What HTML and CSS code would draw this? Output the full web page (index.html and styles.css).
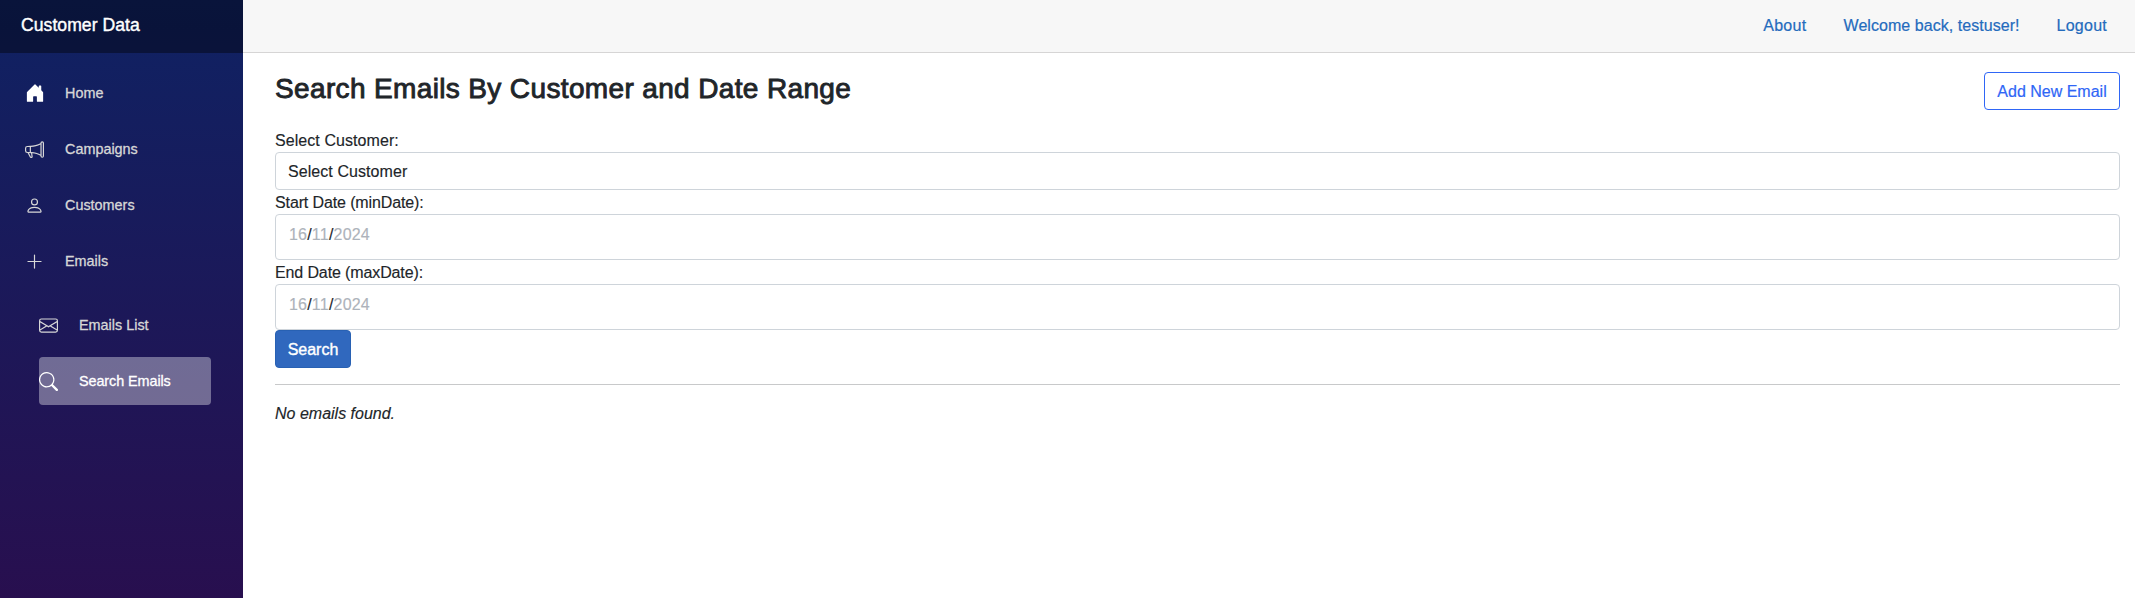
FILE: index.html
```html
<!DOCTYPE html>
<html lang="en">
<head>
<meta charset="utf-8">
<title>Customer Data</title>
<link rel="stylesheet" href="styles.css">
</head>
<body>
<div class="page">
  <aside class="sidebar">
    <div class="brand">Customer Data</div>
    <nav class="nav">
      <a class="nav-link"><svg class="icon icon-home" viewBox="0 0 16 16"><path d="M6.5 14.5v-3.505c0-.245.25-.495.5-.495h2c.25 0 .5.25.5.5v3.5a.5.5 0 0 0 .5.5h4a.5.5 0 0 0 .5-.5v-7a.5.5 0 0 0-.146-.354L13 5.793V2.5a.5.5 0 0 0-.5-.5h-1a.5.5 0 0 0-.5.5v1.293L8.354 1.146a.5.5 0 0 0-.708 0l-6 6A.5.5 0 0 0 1.5 7.5v7a.5.5 0 0 0 .5.5h4a.5.5 0 0 0 .5-.5"/></svg><span>Home</span></a>
      <a class="nav-link"><svg class="icon" viewBox="0 0 16 16"><path d="M13 2.5a1.5 1.5 0 0 1 3 0v11a1.5 1.5 0 0 1-3 0v-.214c-2.162-1.241-4.49-1.843-6.912-2.083l.405 2.712A1 1 0 0 1 5.51 15.1h-.548a1 1 0 0 1-.916-.599l-1.85-3.49-.202-.003A2.014 2.014 0 0 1 0 9V7a2.02 2.02 0 0 1 1.992-2.013 75 75 0 0 0 2.483-.075c3.043-.154 6.148-.849 8.525-2.199zm1 0v11a.5.5 0 0 0 1 0v-11a.5.5 0 0 0-1 0m-1 1.35c-2.344 1.205-5.209 1.842-8 2.033v4.233q.27.015.537.036c2.568.189 5.093.744 7.463 1.993zm-9 6.215v-4.13a95 95 0 0 1-1.992.052A1.02 1.02 0 0 0 1 7v2c0 .55.448 1.002 1.006 1.009A61 61 0 0 1 4 10.065m-.657.975 1.609 3.037.01.024h.548l-.002-.014-.443-2.966a68 68 0 0 0-1.722-.082z"/></svg><span>Campaigns</span></a>
      <a class="nav-link"><svg class="icon" viewBox="0 0 16 16"><path d="M8 8a3 3 0 1 0 0-6 3 3 0 0 0 0 6m2-3a2 2 0 1 1-4 0 2 2 0 0 1 4 0m4 8c0 1-1 1-1 1H3s-1 0-1-1 1-4 6-4 6 3 6 4m-1-.004c-.001-.246-.154-.986-.832-1.664C11.516 10.68 10.289 10 8 10s-3.516.68-4.168 1.332c-.678.678-.83 1.418-.832 1.664z"/></svg><span>Customers</span></a>
      <a class="nav-link"><svg class="icon" viewBox="0 0 16 16"><path d="M8 2a.5.5 0 0 1 .5.5v5h5a.5.5 0 0 1 0 1h-5v5a.5.5 0 0 1-1 0v-5h-5a.5.5 0 0 1 0-1h5v-5A.5.5 0 0 1 8 2"/></svg><span>Emails</span></a>
      <div class="subnav">
        <a class="nav-link"><svg class="icon" viewBox="0 0 16 16"><path d="M0 4a2 2 0 0 1 2-2h12a2 2 0 0 1 2 2v8a2 2 0 0 1-2 2H2a2 2 0 0 1-2-2zm2-1a1 1 0 0 0-1 1v.217l7 4.2 7-4.2V4a1 1 0 0 0-1-1zm13 2.383-4.708 2.825L15 11.105zm-.034 6.876-5.64-3.471L8 9.583l-1.326-.795-5.64 3.47A1 1 0 0 0 2 13h12a1 1 0 0 0 .966-.741M1 11.105l4.708-2.897L1 5.383z"/></svg><span>Emails List</span></a>
        <a class="nav-link active"><svg class="icon" viewBox="0 0 16 16"><path d="M11.742 10.344a6.5 6.5 0 1 0-1.397 1.398h-.001q.044.06.098.115l3.85 3.85a1 1 0 0 0 1.415-1.414l-3.85-3.85a1 1 0 0 0-.115-.1zM12 6.5a5.5 5.5 0 1 1-11 0 5.5 5.5 0 0 1 11 0"/></svg><span>Search Emails</span></a>
      </div>
    </nav>
  </aside>
  <main class="main">
    <header class="topbar">
      <a class="about">About</a>
      <a>Welcome back, testuser!</a>
      <a class="logout">Logout</a>
    </header>
    <article class="content">
      <div class="heading">
        <h1>Search Emails By Customer and Date Range</h1>
        <button class="btn btn-outline">Add New Email</button>
      </div>
      <form>
        <label class="customer">Select Customer:</label>
        <div class="control customer">Select Customer</div>
        <label>Start Date (minDate):</label>
        <div class="control date"><span>16</span>/<span>11</span>/<span>2024</span></div>
        <label>End Date (maxDate):</label>
        <div class="control date"><span>16</span>/<span>11</span>/<span>2024</span></div>
        <button type="button" class="btn btn-primary">Search</button>
      </form>
      <hr>
      <p><em>No emails found.</em></p>
    </article>
  </main>
</div>
</body>
</html>
```
FILE: styles.css
```css
* { box-sizing: border-box; }
body {
  margin: 0;
  font: 16px/24px "Liberation Sans", Arial, sans-serif;
  color: #212529;
  background: #fff;
}
.page { display: flex; height: 598px; overflow: hidden; }
.sidebar {
  width: 243px;
  flex: none;
  background: linear-gradient(180deg, #0f2263 0%, #280f4f 100%);
}
.brand {
  height: 53px;
  padding: 13px 0 0 21px;
  background: rgba(0, 0, 0, .4);
  color: #fff;
  font-size: 17.6px;
  letter-spacing: .04px;
  -webkit-text-stroke: .4px #fff;
}
.nav { padding: 16px 32px 0 25px; font-size: 14.4px; }
.nav-link {
  display: flex;
  align-items: center;
  height: 48px;
  margin-bottom: 8px;
  border-radius: 4px;
  color: #d7d7d7;
  -webkit-text-stroke: .3px currentColor;
}
.icon {
  width: 19px;
  height: 19px;
  margin-right: 21px;
  fill: currentColor;
  stroke: none;
  flex: none;
}
.icon-home { width: 20px; height: 20px; margin-right: 20px; fill: #fff; }
.subnav { padding: 8px 0 0 14px; }
.active {
  background: rgba(255, 255, 255, .37);
  color: #fff;
  letter-spacing: -.08px;
}
.main { flex: 1; }
.topbar {
  display: flex;
  justify-content: flex-end;
  gap: 37px;
  height: 53px;
  padding: 14px 28px 0 0;
  background: #f7f7f7;
  border-bottom: 1px solid #d6d5d5;
  color: #246bbd;
  letter-spacing: .05px;
  -webkit-text-stroke: .2px currentColor;
}
.about { letter-spacing: .3px; }
.logout { letter-spacing: .25px; }
.content {
  padding: 19px 15px 0 32px;
  -webkit-text-stroke: .15px currentColor;
}
.heading { display: flex; justify-content: space-between; height: 56px; }
h1 {
  margin: 0;
  font-size: 28px;
  line-height: 34px;
  font-weight: 400;
  letter-spacing: .36px;
  -webkit-text-stroke: .9px currentColor;
}
label { display: block; height: 24px; padding-top: 1px; letter-spacing: -.12px; }
.control {
  height: 38px;
  padding: 7px 12px 5px;
  border: 1px solid #ced4da;
  border-radius: 4px;
}
.customer { letter-spacing: .07px; }
.date { height: 46px; padding: 8px 13px; letter-spacing: .2px; }
.date span { color: #adb3bb; }
.btn {
  display: block;
  height: 38px;
  padding: 2px 11px 0;
  border: 1px solid;
  border-radius: 4px;
  font: inherit;
}
.btn-outline {
  width: 136px;
  background: #fff;
  border-color: #2f66f6;
  color: #2f66f6;
  -webkit-text-stroke: .2px currentColor;
}
.btn-primary {
  width: 76px;
  background: #3068be;
  border-color: #2861b3;
  color: #fff;
  -webkit-text-stroke: .4px #fff;
}
hr { margin: 16px 0; border: 0; border-top: 1px solid #c8c9ca; }
p { margin: 0; padding-top: 1px; }
```
